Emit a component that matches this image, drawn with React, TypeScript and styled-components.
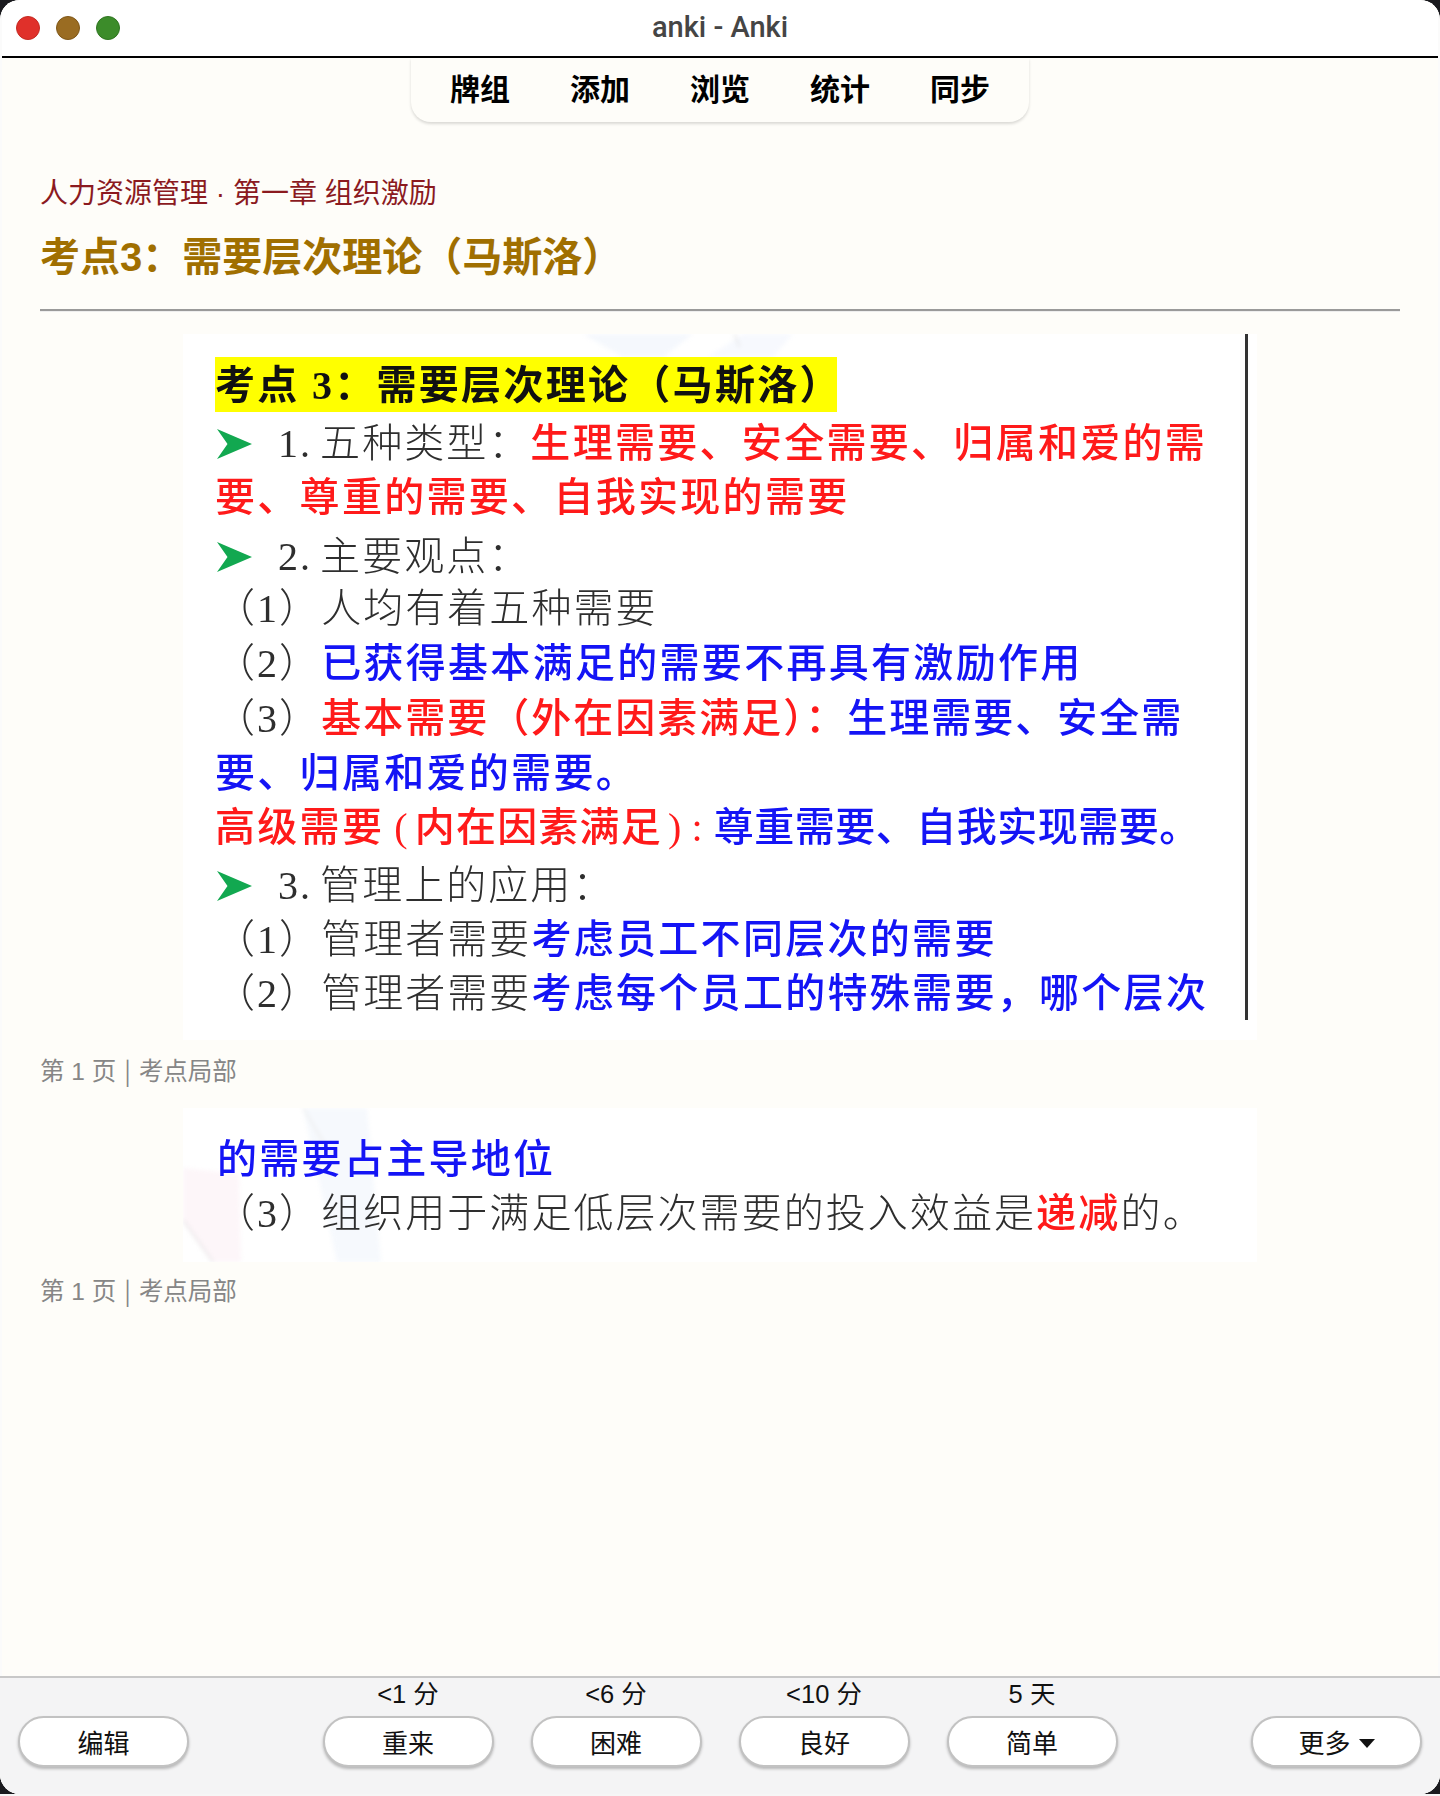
import styled, { createGlobalStyle } from 'styled-components';

const cjk = '"Noto Sans CJK SC", "Noto Sans", sans-serif';
const latinCjk = `"Liberation Sans", ${cjk}`;
const scanFont = '"Liberation Serif", "Noto Sans CJK SC", serif';

const GlobalStyle = createGlobalStyle`
  html {
    margin: 0;
    background: #f6f6f6;
  }
  body {
    width: 1440px;
    height: 1794px;
    margin: 0;
    padding: 0;
    background: #1a1a1e;
  }
  * {
    box-sizing: border-box;
  }
`;

const Deck = [
  { id: 'decks', label: '牌组' },
  { id: 'add', label: '添加' },
  { id: 'browse', label: '浏览' },
  { id: 'stats', label: '统计' },
  { id: 'sync', label: '同步' },
];

const Answers = [
  { id: 'again', label: '重来', due: '<1 分' },
  { id: 'hard', label: '困难', due: '<6 分' },
  { id: 'good', label: '良好', due: '<10 分' },
  { id: 'easy', label: '简单', due: '5 天' },
];

const ArrowMark = () => (
  <ArrowSvg viewBox="0 0 35 30" aria-hidden="true">
    <path d="M0 0 L35 15 L0 30 L10.5 15 Z" fill="#12a850" />
  </ArrowSvg>
);

const PageCaption = ({ top }: { top: number }) => (
  <Caption $top={top}>
    第 1 页<Separator>|</Separator>考点局部
  </Caption>
);

const App = () => (
  <Window>
    <GlobalStyle />
    <TitleBar>
      <Lights>
        <Light $color="#e0302a" $edge="#c42a22" />
        <Light $color="#9a6c22" $edge="#7f5718" />
        <Light $color="#3c8c2a" $edge="#2f7520" />
      </Lights>
      <WindowTitle>anki - Anki</WindowTitle>
    </TitleBar>

    <Main>
      <TopNav>
        {Deck.map((item) => (
          <NavLink key={item.id}>{item.label}</NavLink>
        ))}
      </TopNav>

      <Card>
        <Breadcrumb>人力资源管理 · 第一章 组织激励</Breadcrumb>
        <Heading>考点3：需要层次理论（马斯洛）</Heading>
        <Rule />

        <Scan $height={706}>
          <ScanBackdrop viewBox="0 0 1074 706" aria-hidden="true">
            <path d="M400 0 L510 0 L480 23 L440 23 Z" fill="#f5f8fd" />
            <path d="M525 23 L560 0 L610 0 L590 23 Z" fill="#f7f9fe" />
            <path d="M552 1 L556 12" stroke="#cfcfcf" strokeWidth="2" strokeDasharray="2 3" />
          </ScanBackdrop>
          <VerticalEdge />
          <ScanBody $top={23}>
            <Highlight>考点 3：需要层次理论（马斯洛）</Highlight>
            <ScanLine $shift={1}>
              <ArrowMark />
              <Muted>
                <ListNumber>1.</ListNumber>五种类型：
              </Muted>
              <Red>生理需要、安全需要、归属和爱的需</Red>
            </ScanLine>
            <ScanLine>
              <Red>要、尊重的需要、自我实现的需要</Red>
            </ScanLine>
            <ScanLine $shift={5}>
              <ArrowMark />
              <Muted>
                <ListNumber>2.</ListNumber>主要观点：
              </Muted>
            </ScanLine>
            <ScanLine $shift={-2}>
              <Muted>（1）人均有着五种需要</Muted>
            </ScanLine>
            <ScanLine $shift={1}>
              <Muted>（2）</Muted>
              <Blue>已获得基本满足的需要不再具有激励作用</Blue>
            </ScanLine>
            <ScanLine $shift={1}>
              <Muted>（3）</Muted>
              <Red $tracking={2}>基本需要（外在因素满足）：</Red>
              <Blue $tracking={2}>生理需要、安全需</Blue>
            </ScanLine>
            <ScanLine $shift={1}>
              <Blue>要、归属和爱的需要。</Blue>
            </ScanLine>
            <ScanLine>
              <Red>高级需要</Red>
              <Red $tracking={1.2}>
                <Punct $before={10} $after={6}>(</Punct>内在因素满足
                <Punct $before={6} $after={4}>)</Punct>
                <Punct $before={5} $after={10}>:</Punct>
              </Red>
              <Blue $tracking={0.5}>尊重需要、自我实现需要。</Blue>
            </ScanLine>
            <ScanLine $shift={4}>
              <ArrowMark />
              <Muted>
                <ListNumber>3.</ListNumber>管理上的应用：
              </Muted>
            </ScanLine>
            <ScanLine>
              <Muted>（1）管理者需要</Muted>
              <Blue>考虑员工不同层次的需要</Blue>
            </ScanLine>
            <ScanLine>
              <Muted>（2）管理者需要</Muted>
              <Blue>考虑每个员工的特殊需要，哪个层次</Blue>
            </ScanLine>
          </ScanBody>
        </Scan>
        <PageCaption top={14} />

        <Scan $height={154}>
          <ScanBackdrop viewBox="0 0 1074 154" aria-hidden="true">
            <path d="M0 60 L56 66 L58 154 L30 154 L0 112 Z" fill="#fdf6f9" />
            <path d="M120 0 L184 0 L198 154 L154 154 Z" fill="#f6f9fd" />
            <path d="M0 112 L30 154" stroke="#e4e0e2" strokeWidth="1.5" fill="none" />
            <path d="M120 0 L150 50" stroke="#ececec" strokeWidth="1.5" fill="none" />
          </ScanBackdrop>
          <ScanBody $top={21}>
            <ScanLine $indent={2}>
              <Blue>的需要占主导地位</Blue>
            </ScanLine>
            <ScanLine>
              <Muted>（3）组织用于满足低层次需要的投入效益是</Muted>
              <Red>递减</Red>
              <Muted>的。</Muted>
            </ScanLine>
          </ScanBody>
        </Scan>
        <PageCaption top={12} />
      </Card>
    </Main>

    <BottomBar>
      <PillButton>编辑</PillButton>
      <AnswerRow>
        {Answers.map((answer) => (
          <AnswerCell key={answer.id}>
            <Due>{answer.due}</Due>
            <PillButton>{answer.label}</PillButton>
          </AnswerCell>
        ))}
      </AnswerRow>
      <PillButton>
        更多<Caret />
      </PillButton>
    </BottomBar>
  </Window>
);

const Window = styled.div`
  display: flex;
  flex-direction: column;
  width: 1440px;
  height: 1794px;
  overflow: hidden;
  border-radius: 20px;
  background: #fefdf9;
  font-family: ${cjk};
  box-shadow: inset 2px 0 0 #fbfbfb, inset -2px 0 0 #fbfbfb;
`;

const TitleBar = styled.header`
  position: relative;
  display: flex;
  align-items: center;
  justify-content: center;
  flex: none;
  height: 58px;
  margin: 0 2px;
  padding-bottom: 3px;
  border-bottom: 2px solid #000;
  background: #fff;
`;

const Lights = styled.div`
  position: absolute;
  top: 16px;
  left: 14px;
  display: flex;
  gap: 16px;
`;

const Light = styled.span<{ $color: string; $edge: string }>`
  width: 24px;
  height: 24px;
  border: 1px solid ${(p) => p.$edge};
  border-radius: 50%;
  background: ${(p) => p.$color};
`;

const WindowTitle = styled.div`
  color: #454545;
  font-family: Roboto, sans-serif;
  font-size: 29px;
  font-weight: 500;
  line-height: 32px;
`;

const Main = styled.main`
  flex: 1;
  min-height: 0;
`;

const TopNav = styled.nav`
  display: flex;
  justify-content: center;
  gap: 60px;
  width: 618px;
  height: 64px;
  margin: 0 auto;
  padding-top: 9px;
  border-radius: 0 0 20px 20px;
  background: #fefdf9;
  box-shadow: 0 2px 3px rgba(0, 0, 0, 0.14);
`;

const NavLink = styled.a`
  color: #000;
  font-size: 30px;
  font-weight: 700;
  line-height: 40px;
`;

const Card = styled.section`
  padding: 52px 40px 0;
`;

const Breadcrumb = styled.div`
  color: #8b1a1f;
  font-family: ${latinCjk};
  font-size: 28px;
  line-height: 40px;
`;

const Heading = styled.h1`
  margin: 15px 0 0;
  color: #a06f00;
  font-family: ${latinCjk};
  font-size: 40px;
  font-weight: 700;
  line-height: 56px;
`;

const Rule = styled.hr`
  height: 3px;
  margin: 24px 0 22px;
  border: 0;
  border-top: 2px solid #9a9a9a;
  border-bottom: 1px solid #eeeeee;
`;

const Scan = styled.figure<{ $height: number }>`
  position: relative;
  width: 1074px;
  height: ${(p) => p.$height}px;
  margin: 0 0 0 143px;
  overflow: hidden;
  background: #fff;
`;

const ScanBackdrop = styled.svg`
  position: absolute;
  inset: 0;
  width: 100%;
  height: 100%;
  filter: blur(2px);
`;

const VerticalEdge = styled.div`
  position: absolute;
  top: 0;
  left: 1062px;
  width: 3px;
  height: 686px;
  background: #333;
`;

const ScanBody = styled.div<{ $top: number }>`
  position: relative;
  padding: ${(p) => p.$top}px 0 0 32px;
  color: #333;
  font-family: ${scanFont};
  font-size: 40px;
  letter-spacing: 2.3px;
  filter: blur(0.4px);
`;

const Highlight = styled.div`
  width: 622px;
  height: 55px;
  padding-top: 1px;
  color: #111;
  background: #ffff00;
  font-weight: 700;
  line-height: 55px;
  white-space: nowrap;
`;

const ScanLine = styled.div<{ $shift?: number; $indent?: number }>`
  display: flex;
  align-items: center;
  height: 54px;
  margin-top: ${(p) => p.$shift ?? 0}px;
  padding-left: ${(p) => p.$indent ?? 0}px;
  white-space: nowrap;
`;

const Muted = styled.span`
  color: #2e2e2e;
  font-weight: 300;
  letter-spacing: 2.05px;
`;

const ListNumber = styled.span`
  margin-right: 8px;
`;

const Red = styled.span<{ $tracking?: number }>`
  color: #ff1a1a;
  font-weight: 500;
  letter-spacing: ${(p) => p.$tracking ?? 2.3}px;
`;

const Blue = styled.span<{ $tracking?: number }>`
  color: #1414f5;
  font-weight: 500;
  letter-spacing: ${(p) => p.$tracking ?? 2.3}px;
`;

const Punct = styled.span<{ $before: number; $after: number }>`
  margin: 0 ${(p) => p.$after}px 0 ${(p) => p.$before}px;
`;

const ArrowSvg = styled.svg`
  flex: none;
  width: 35px;
  height: 30px;
  margin: 7px 26px 0 2px;
`;

const Caption = styled.div<{ $top: number }>`
  height: 68px;
  padding-top: ${(p) => p.$top}px;
  color: #868686;
  font-family: ${latinCjk};
  font-size: 24.5px;
  line-height: 32px;
`;

const Separator = styled.span`
  margin: 0 8px;
  font-family: ${cjk};
`;

const BottomBar = styled.footer`
  display: flex;
  justify-content: space-between;
  flex: none;
  height: 118px;
  padding: 38px 18px 0 18px;
  border-top: 2px solid #c8c8c8;
  background: #f4f4f5;
`;

const AnswerRow = styled.div`
  display: flex;
  gap: 37px;
`;

const AnswerCell = styled.div`
  position: relative;
`;

const Due = styled.div`
  position: absolute;
  top: -37px;
  left: 0;
  right: 0;
  color: #111;
  font-family: ${latinCjk};
  font-size: 25.5px;
  line-height: 30px;
  text-align: center;
`;

const PillButton = styled.button`
  display: flex;
  align-items: center;
  justify-content: center;
  width: 171px;
  height: 51px;
  padding: 0;
  border: 2px solid #c2c2c2;
  border-radius: 26px;
  background: #fff;
  color: #111;
  font-family: ${cjk};
  font-size: 26px;
  box-shadow: 0 2px 3px rgba(0, 0, 0, 0.25);
`;

const Caret = styled.span`
  width: 0;
  height: 0;
  margin: 4px 0 0 8px;
  border-top: 9px solid #111;
  border-right: 8px solid transparent;
  border-left: 8px solid transparent;
`;

export default App;
